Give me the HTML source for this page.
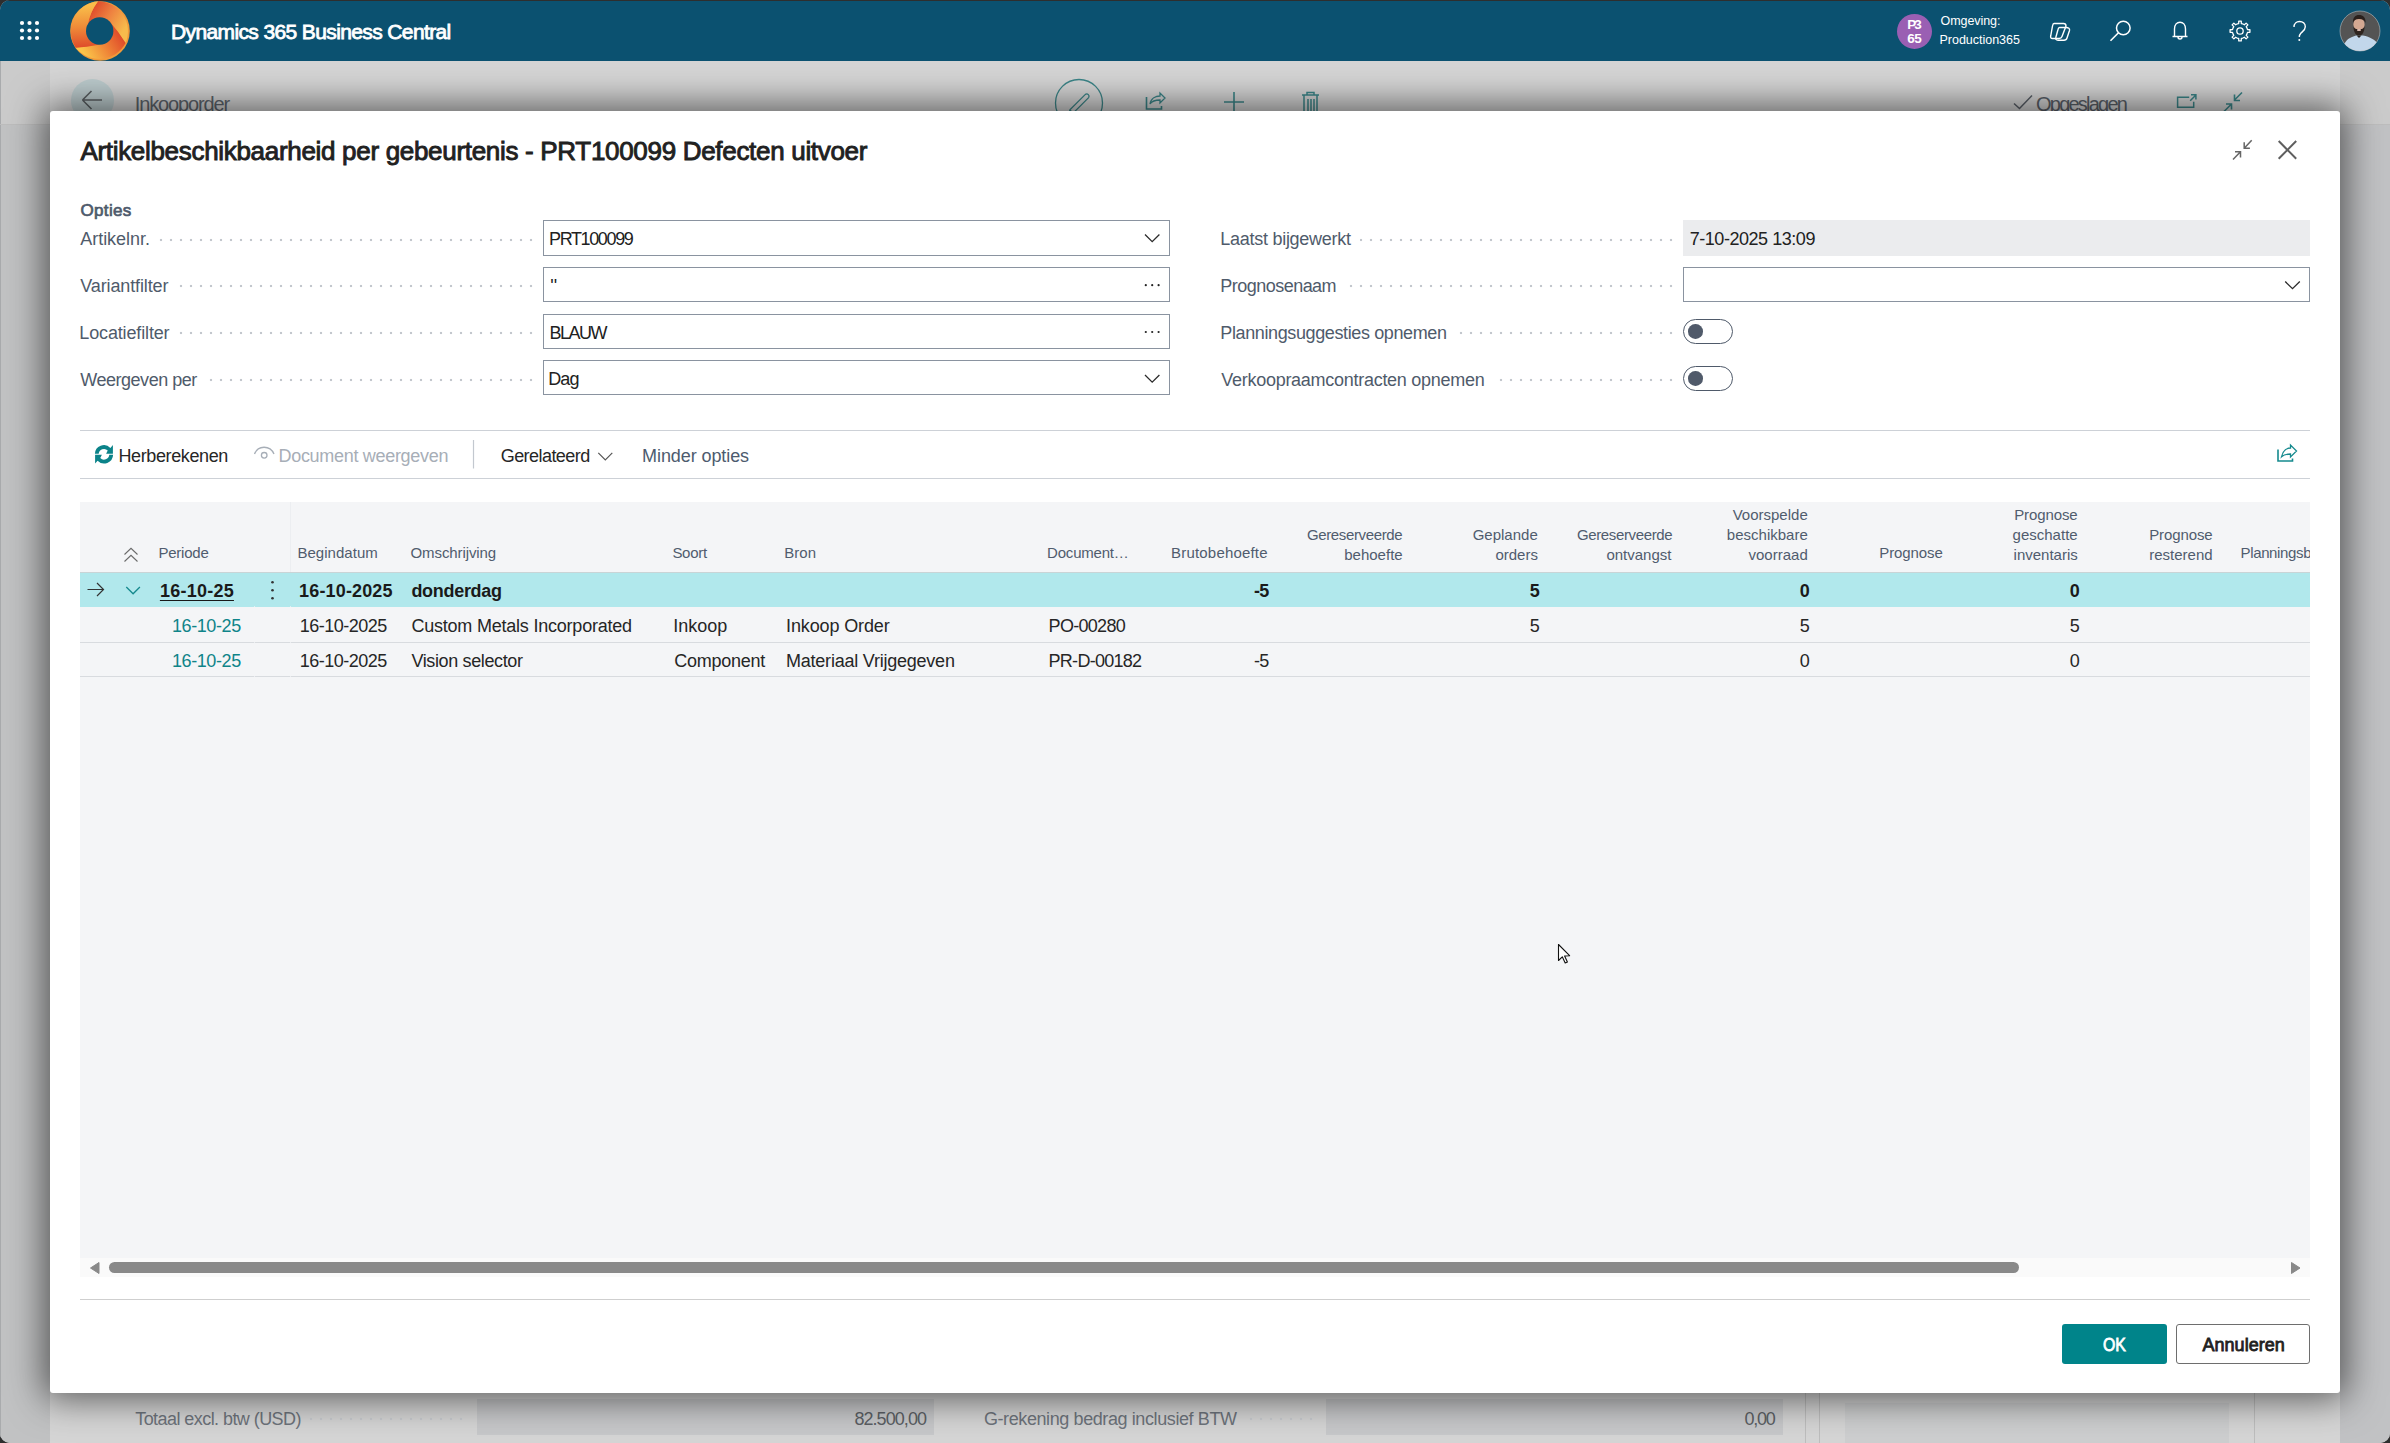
<!DOCTYPE html>
<html><head><meta charset="utf-8">
<style>
html,body{margin:0;padding:0;}
body{width:2390px;height:1443px;overflow:hidden;background:#2e2e2e;font-family:"Liberation Sans",sans-serif;position:relative;}
#win{position:absolute;left:0;top:0;width:2390px;height:1443px;border-radius:10px;overflow:hidden;background:#c6c7c9;}
.a{position:absolute;}
.t{position:absolute;white-space:pre;font-family:"Liberation Sans",sans-serif;}
.lbl{background:#fff;padding-right:9px;}
svg{position:absolute;overflow:visible;}
.box{position:absolute;box-sizing:border-box;border:1px solid #8a93a0;background:#fff;}
.lead{position:absolute;height:4px;background-image:radial-gradient(circle at 5px 2px,#c3c7cd 1.15px,rgba(255,255,255,0) 1.6px);background-size:10px 4px;}
</style></head><body>
<div id="win">
<!-- top dark line -->
<div class="a" style="left:0;top:0;width:2390px;height:1px;background:#2e2e2e;z-index:50"></div>
<!-- topbar -->
<div class="a" style="left:0;top:0;width:2390px;height:61px;background:#0b5170;"></div>

<!-- page backdrop -->
<div class="a" style="left:0;top:61px;width:50px;height:1382px;background:#c1c2c3;"></div>
<div class="a" style="left:0;top:61px;width:1px;height:1382px;background:#a9abad;"></div>
<div class="a" style="left:2340px;top:61px;width:50px;height:1382px;background:#c1c2c4;"></div>
<div class="a" style="left:50px;top:61px;width:2290px;height:1382px;background:#d5d5d5;"></div>
<div class="a" style="left:1px;top:61px;width:49px;height:63px;background:#cbcbcb;"></div>
<div class="a" style="left:2340px;top:61px;width:50px;height:63px;background:#cbcbcb;"></div>
<div class="a" style="left:0;top:124px;width:50px;height:1px;background:#bdbdbd;"></div>
<div class="a" style="left:2340px;top:124px;width:50px;height:1px;background:#bdbdbd;"></div>

<!-- page behind content -->
<div class="a" style="left:71px;top:79px;width:43px;height:43px;border-radius:50%;background:#bccbcd;"></div>
<svg style="left:0;top:0" width="2390" height="130">
  <path d="M82.5,100 H102 M82.5,100 L91.5,91 M82.5,100 L91.5,109" stroke="#5b6063" stroke-width="1.6" fill="none"/>
  <circle cx="1079" cy="103" r="23.5" stroke="#3b8588" stroke-width="1.3" fill="none"/>
  <path d="M1085.4,94.4 L1069.9,109.9 L1069,114 L1073.1,113.1 L1088.6,97.6 A2.3,2.3 0 0 0 1085.4,94.4 Z M1069.9,109.9 L1073.1,113.1" stroke="#3b8588" stroke-width="1.3" fill="none"/>
  <path d="M1146.5,97 V109 H1161.5 V106" stroke="#3b8588" stroke-width="1.6" fill="none"/>
  <path d="M1150,104 C1151,98 1156,96 1160,96 V93 L1165,98 L1160,103 V100 C1156,100 1152,101 1150,104 Z" stroke="#3b8588" stroke-width="1.3" fill="none"/>
  <path d="M1224,102 H1244 M1234,92 V112" stroke="#3b8588" stroke-width="1.6" fill="none"/>
  <path d="M1302,95 H1319 M1307,95 V92.5 H1314 V95 M1304,95 V112 M1317,95 V112 M1308,99 V112 M1311,99 V112 M1314,99 V112" stroke="#3b8588" stroke-width="1.5" fill="none"/>
  <path d="M2014,103.5 L2019.5,108.5 L2032,95.5" stroke="#5a6068" stroke-width="1.5" fill="none"/>
  <path d="M2189.2,97.2 H2177.6 V107.2 H2193.7 V101.7 M2190.2,100.7 L2195.7,95.2 M2191,94.7 H2195.9 V99.6" stroke="#3b8588" stroke-width="1.5" fill="none"/>
  <path d="M2223.5,112 L2231,104.5 M2226,104 H2231.5 V109.5 M2242,92.5 L2234.5,100 M2234.5,94.5 V100.5 H2240" stroke="#3b8588" stroke-width="1.6" fill="none"/>
</svg>
<!-- bottom behind fields -->
<div class="a" style="left:477px;top:1399px;width:457px;height:36px;background:#c7c8ca;"></div>
<div class="a" style="left:1326px;top:1399px;width:457px;height:36px;background:#c7c8ca;"></div>
<div class="a" style="left:1805px;top:1393px;width:1px;height:50px;background:#bdbdbd;"></div>
<div class="a" style="left:1819px;top:1393px;width:1px;height:50px;background:#bdbdbd;"></div>
<div class="a" style="left:1845px;top:1403px;width:384px;height:40px;background:#cdcecf;"></div>
<div class="a" style="left:2254px;top:1393px;width:1px;height:50px;background:#bdbdbd;"></div>
<div class="lead" style="left:306px;top:1417px;width:160px;opacity:.8"></div>
<div class="lead" style="left:1246px;top:1417px;width:70px;opacity:.8"></div>

<div class="t" style="left:134.70px;top:93.50px;font-size:20px;line-height:20px;font-weight:400;color:#5d646c;letter-spacing:-1.118px;">Inkooporder</div>
<div class="t" style="left:2036.00px;top:93.50px;font-size:20px;line-height:20px;font-weight:400;color:#5a6068;letter-spacing:-1.771px;">Opgeslagen</div>
<div class="t" style="left:135.20px;top:1409.70px;font-size:18px;line-height:18px;font-weight:400;color:#6d737b;letter-spacing:-0.560px;">Totaal excl. btw (USD)</div>
<div class="t" style="left:854.40px;top:1409.60px;font-size:18px;line-height:18px;font-weight:400;color:#5b5f64;letter-spacing:-0.933px;">82.500,00</div>
<div class="t" style="left:983.90px;top:1409.60px;font-size:18px;line-height:18px;font-weight:400;color:#6d737b;letter-spacing:-0.401px;">G-rekening bedrag inclusief BTW</div>
<div class="t" style="left:1744.60px;top:1409.60px;font-size:18px;line-height:18px;font-weight:400;color:#5b5f64;letter-spacing:-1.274px;">0,00</div>
<!-- dialog -->
<div class="a" style="left:50px;top:111px;width:2290px;height:1282px;background:#fff;border-radius:3px;box-shadow:0 0 36px 6px rgba(0,0,0,0.58);"></div>

<!-- dialog header icons -->
<svg style="left:0;top:0" width="2390" height="200">
  <path d="M2233,159.5 L2240.5,151.7 M2235,151.7 H2240.5 V157.5 M2251.7,140.3 L2244.2,148.2 M2244.2,142.3 V148.2 H2249.9" stroke="#666" stroke-width="1.5" fill="none"/>
  <path d="M2278.7,141 L2296.2,158.8 M2296.2,141 L2278.7,158.8" stroke="#5f5f5f" stroke-width="2" fill="none"/>
</svg>

<!-- leaders -->
<div class="lead" style="left:86px;top:238px;width:450px;"></div>
<div class="lead" style="left:86px;top:284px;width:450px;"></div>
<div class="lead" style="left:86px;top:331px;width:450px;"></div>
<div class="lead" style="left:86px;top:378px;width:450px;"></div>
<div class="lead" style="left:1226px;top:238px;width:450px;"></div>
<div class="lead" style="left:1226px;top:284px;width:450px;"></div>
<div class="lead" style="left:1226px;top:331px;width:450px;"></div>
<div class="lead" style="left:1226px;top:378px;width:450px;"></div>

<!-- inputs -->
<div class="box" style="left:543px;top:220px;width:627px;height:36px;"></div>
<div class="box" style="left:543px;top:267px;width:627px;height:35px;"></div>
<div class="box" style="left:543px;top:314px;width:627px;height:35px;"></div>
<div class="box" style="left:543px;top:360px;width:627px;height:35px;"></div>
<div class="a" style="left:1683px;top:220px;width:627px;height:36px;background:#ebecee;"></div>
<div class="box" style="left:1683px;top:267px;width:627px;height:35px;"></div>
<!-- toggles -->
<div class="a" style="left:1683px;top:319px;width:50px;height:25px;box-sizing:border-box;border:1.5px solid #4f5a6a;border-radius:13px;"></div>
<div class="a" style="left:1688.2px;top:324.1px;width:14.6px;height:14.6px;border-radius:50%;background:#505a6a;"></div>
<div class="a" style="left:1683px;top:366px;width:50px;height:25px;box-sizing:border-box;border:1.5px solid #4f5a6a;border-radius:13px;"></div>
<div class="a" style="left:1688.2px;top:371.2px;width:14.6px;height:14.6px;border-radius:50%;background:#505a6a;"></div>

<svg style="left:0;top:0" width="2390" height="500">
  <!-- chevrons -->
  <path d="M1145,234.5 L1152.2,241.7 L1159.4,234.5" stroke="#2b2b2b" stroke-width="1.3" fill="none"/>
  <path d="M1145,375 L1152.2,382.2 L1159.4,375" stroke="#2b2b2b" stroke-width="1.3" fill="none"/>
  <path d="M2285.2,281.5 L2292.5,288.7 L2299.8,281.5" stroke="#2b2b2b" stroke-width="1.3" fill="none"/>
  <!-- ellipsis -->
  <g fill="#222"><circle cx="1145.8" cy="285.2" r="1.1"/><circle cx="1152.2" cy="285.2" r="1.1"/><circle cx="1158.6" cy="285.2" r="1.1"/>
  <circle cx="1145.8" cy="332" r="1.1"/><circle cx="1152.2" cy="332" r="1.1"/><circle cx="1158.6" cy="332" r="1.1"/></g>
  <!-- refresh icon -->
  <g fill="#0b8389">
    <path d="M94.9,453.8 A9,9 0 0 1 110.4,447.9 L112.9,445 L112.9,453.8 L106.1,453.8 L107.75,450.55 A5.3,5.3 0 0 0 98.7,453.8 Z"/>
    <path d="M113.1,454.8 A9,9 0 0 1 97.6,460.7 L95.1,463.6 L95.1,454.8 L101.9,454.8 L100.25,458.05 A5.3,5.3 0 0 0 109.3,454.8 Z"/>
  </g>
  <!-- eye -->
  <path d="M254.5,454 C258,445 270,445 274,454" stroke="#a7aeb7" stroke-width="1.3" fill="none"/>
  <circle cx="264.2" cy="455.3" r="2.8" stroke="#a7aeb7" stroke-width="1.3" fill="none"/>
  <!-- separator -->
  <path d="M473.5,440 V468.5" stroke="#c3c8cf" stroke-width="1.2"/>
  <!-- gerelateerd chevron -->
  <path d="M598.3,452.8 L605.3,459.8 L612.3,452.8" stroke="#555" stroke-width="1.2" fill="none"/>
  <!-- share -->
  <path d="M2278,449.5 V461 H2292.5 V458.5" stroke="#168a8e" stroke-width="1.6" fill="none"/>
  <path d="M2281.5,456.8 C2283,450 2287.5,448 2290.5,448 V445 L2296.5,451 L2290.5,457 V454 C2287,454 2284,454.5 2281.5,456.8 Z" stroke="#168a8e" stroke-width="1.3" fill="none"/>
</svg>
<!-- action bar lines -->
<div class="a" style="left:80px;top:430px;width:2230px;height:1px;background:#cdd1d7;"></div>
<div class="a" style="left:80px;top:478px;width:2230px;height:1px;background:#cdd1d7;"></div>

<!-- grid -->
<div class="a" style="left:80px;top:502px;width:2230px;height:756px;background:#f4f5f7;"></div>
<div class="a" style="left:80px;top:572px;width:2230px;height:35px;background:#b1e8ec;"></div>
<div class="a" style="left:80px;top:572px;width:2230px;height:1px;background:#c9d4d6;"></div>
<div class="a" style="left:80px;top:642px;width:2230px;height:1px;background:#d8dbdf;"></div>
<div class="a" style="left:80px;top:676px;width:2230px;height:1px;background:#d8dbdf;"></div>
<div class="a" style="left:290px;top:502px;width:1px;height:70px;background:#eceef1;"></div>
<div class="a" style="left:254px;top:606px;width:1px;height:71px;background:#f4f5f7;opacity:.7"></div>
<div class="a" style="left:290px;top:606px;width:1px;height:71px;background:#f4f5f7;opacity:.7"></div>
<svg style="left:0;top:0" width="2390" height="700">
  <path d="M124.5,554.5 L131,548.3 L137.5,554.5 M124.5,561.5 L131,555.3 L137.5,561.5" stroke="#6a6a6a" stroke-width="1.1" fill="none"/>
  <path d="M87.5,589.5 H103.5 M97,583 L103.5,589.5 L97,596" stroke="#333" stroke-width="1.2" fill="none"/>
  <path d="M126.3,587 L133.1,593.8 L139.9,587" stroke="#168a8e" stroke-width="1.3" fill="none"/>
  <g fill="#333"><circle cx="272.5" cy="582.2" r="1.3"/><circle cx="272.5" cy="590.3" r="1.3"/><circle cx="272.5" cy="598.3" r="1.3"/></g>
</svg>
<div class="a" style="left:2230px;top:540px;width:80px;height:30px;overflow:hidden;">
  <div class="t" id="planb" style="left:10.5px;top:5px;font-size:15px;line-height:15px;color:#505c6e;letter-spacing:-0.35px;">Planningsbehoefte</div>
</div>

<!-- scrollbar -->
<div class="a" style="left:80px;top:1258px;width:2230px;height:19px;background:#fafafa;"></div>
<div class="a" style="left:109px;top:1262px;width:1910px;height:11px;border-radius:6px;background:#898989;"></div>
<svg style="left:0;top:0" width="2390" height="1443">
  <path d="M99,1262.5 V1273.5 L90.5,1268 Z" fill="#898989" stroke="#898989" stroke-width="1" stroke-linejoin="round"/>
  <path d="M2291.5,1262.5 V1273.5 L2300,1268 Z" fill="#898989" stroke="#898989" stroke-width="1" stroke-linejoin="round"/>
</svg>
<div class="a" style="left:80px;top:1299px;width:2230px;height:1px;background:#cfcfcf;"></div>
<!-- buttons -->
<div class="a" style="left:2062px;top:1324px;width:105px;height:40px;background:#00848a;border-radius:3px;"></div>
<div class="a" style="left:2176px;top:1324px;width:134px;height:40px;box-sizing:border-box;border:1px solid #6e6e6e;border-radius:3px;background:#fff;"></div>

<!-- cursor -->
<svg style="left:0;top:0" width="2390" height="1443">
  <path d="M1558.5,944.5 L1558.5,960.5 L1562.3,956.8 L1565.2,963 L1567.4,962 L1564.6,956 L1569.6,955.7 Z" fill="#fff" stroke="#111" stroke-width="1.1" stroke-linejoin="round"/>
</svg>

<!-- topbar icons -->
<svg style="left:0;top:0" width="2390" height="61">
  <g fill="#fff">
    <circle cx="22" cy="23" r="2.1"/><circle cx="29.5" cy="23" r="2.1"/><circle cx="37" cy="23" r="2.1"/>
    <circle cx="22" cy="30.5" r="2.1"/><circle cx="29.5" cy="30.5" r="2.1"/><circle cx="37" cy="30.5" r="2.1"/>
    <circle cx="22" cy="38" r="2.1"/><circle cx="29.5" cy="38" r="2.1"/><circle cx="37" cy="38" r="2.1"/>
  </g>
  <defs>
    <linearGradient id="b1" gradientUnits="userSpaceOnUse" x1="92" y1="9" x2="124" y2="30"><stop offset="0" stop-color="#df4b2b"/><stop offset="0.45" stop-color="#ee8040"/><stop offset="1" stop-color="#f7bb4c"/></linearGradient>
    <linearGradient id="b2" gradientUnits="userSpaceOnUse" x1="121" y1="35" x2="86" y2="57"><stop offset="0" stop-color="#df4a2a"/><stop offset="0.45" stop-color="#ee8136"/><stop offset="1" stop-color="#fcc64a"/></linearGradient>
    <linearGradient id="b3" gradientUnits="userSpaceOnUse" x1="86" y1="48" x2="84" y2="6"><stop offset="0" stop-color="#de4a2a"/><stop offset="0.5" stop-color="#ef8a38"/><stop offset="1" stop-color="#f9bd4a"/></linearGradient>
  </defs>
  <circle cx="100" cy="31" r="29.8" fill="#f09a3a"/>
  <path d="M98.07,1.3 A30,30 0 0 1 125.6,43 L109.8,21.7 L108.5,22.9 A12,12 0 0 0 89.1,25.5 L87.6,24.7 Q90,12 98.07,1.3 Z" fill="url(#b1)"/>
  <path d="M125.6,43 A30,30 0 0 1 75.7,47.7 L98.9,44.7 L99,43 A12,12 0 0 0 108.5,22.9 L109.8,21.7 Q119,32 125.6,43 Z" fill="url(#b2)"/>
  <path d="M75.7,47.7 A30,30 0 0 1 98.07,1.3 Q90,12 87.6,24.7 L89.1,25.5 A12,12 0 0 0 99,43 L98.9,44.7 Q86,47 75.7,47.7 Z" fill="url(#b3)"/>
  <circle cx="99.7" cy="31" r="13.7" fill="#0b5170"/>
  <!-- purple badge -->
  <circle cx="1914.5" cy="31.4" r="17.5" fill="#9a5fb3"/>
  <!-- copilot -->
  <g stroke="#fff" stroke-width="1.4" fill="none">
    <path d="M2054,23.5 H2063.5 C2065,23.5 2066,24.5 2066,26 L2062,36.5 C2061.5,38 2060.5,38.5 2059,38.5 H2052.5 C2051,38.5 2050.3,37.5 2050.7,36 L2052.5,26 C2052.8,24.5 2053.5,23.5 2054,23.5 Z"/>
    <path d="M2059.5,27.5 H2066 C2068.5,27.5 2070,28.5 2069.5,30.5 L2067,38 C2066.5,39.8 2065.5,40.2 2064,40.2 H2058 C2056,40.2 2055.3,39 2055.8,37.5 L2058,29.5 C2058.3,28.2 2058.8,27.5 2059.5,27.5 Z"/>
  </g>
  <!-- search -->
  <circle cx="2123.3" cy="28" r="6.8" stroke="#fff" stroke-width="1.5" fill="none"/>
  <path d="M2118.5,32.8 L2110.5,40.8" stroke="#fff" stroke-width="1.6"/>
  <!-- bell -->
  <path d="M2172.5,36.5 H2187.5 M2174.5,36.5 V29 C2174.5,24.8 2177,22.2 2180,22.2 C2183,22.2 2185.5,24.8 2185.5,29 V36.5 M2178,37 A2,2 0 0 0 2182,37" stroke="#fff" stroke-width="1.4" fill="none"/>
  <!-- gear -->
  <path transform="translate(2240,31)" d="M-2.91,-7.02 L-1.31,-7.49 L-1.25,-9.92 L1.25,-9.92 L1.31,-7.49 L2.91,-7.02 L4.37,-6.22 L6.13,-7.90 L7.90,-6.13 L6.22,-4.37 L7.02,-2.91 L7.49,-1.31 L9.92,-1.25 L9.92,1.25 L7.49,1.31 L7.02,2.91 L6.22,4.37 L7.90,6.13 L6.13,7.90 L4.37,6.22 L2.91,7.02 L1.31,7.49 L1.25,9.92 L-1.25,9.92 L-1.31,7.49 L-2.91,7.02 L-4.37,6.22 L-6.13,7.90 L-7.90,6.13 L-6.22,4.37 L-7.02,2.91 L-7.49,1.31 L-9.92,1.25 L-9.92,-1.25 L-7.49,-1.31 L-7.02,-2.91 L-6.22,-4.37 L-7.90,-6.13 L-6.13,-7.90 L-4.37,-6.22Z" stroke="#fff" stroke-width="1.3" fill="none" stroke-linejoin="round"/>
  <circle cx="2240" cy="31" r="3.2" stroke="#fff" stroke-width="1.3" fill="none"/>
  <!-- question -->
  <path d="M2294,27 C2294,23.5 2296.5,21.5 2299.5,21.5 C2302.8,21.5 2305.3,23.5 2305.3,26.7 C2305.3,30 2302.8,31.2 2301,33 C2299.8,34.3 2299.3,35.3 2299.3,37" stroke="#fff" stroke-width="1.4" fill="none"/>
  <circle cx="2299.3" cy="40" r="1" fill="#fff"/>
  <!-- avatar -->
  <clipPath id="avc"><circle cx="2360" cy="31" r="20"/></clipPath>
  <g clip-path="url(#avc)">
    <rect x="2340" y="11" width="40" height="40" fill="#545454"/>
    <path d="M2341,51 C2344,44 2346,39 2352,37 L2356,35.5 L2363,35.5 C2370,37 2375,39.5 2378,44 L2380,51 Z" fill="#c2d7eb"/>
    <path d="M2356.5,35.5 L2359,38 L2361.5,35.5 Z" fill="#2a2624"/>
    <ellipse cx="2359" cy="24.5" rx="5.6" ry="7.2" fill="#d3a892"/>
    <path d="M2353,23 C2352.5,17.5 2355.5,15 2359,15 C2363,15 2366,17.5 2365.5,23 C2364.5,20 2362.5,19 2359,19 C2355.5,19 2354,20 2353,23 Z" fill="#2a201c"/>
    <path d="M2353.4,26 C2353.5,32.5 2356,35.5 2359,35.5 C2362,35.5 2364.6,32.5 2364.6,26 C2363.5,29.5 2361.5,29 2359,29 C2356.5,29 2354.5,29.5 2353.4,26 Z" fill="#2e241f"/>
    <ellipse cx="2359" cy="30" rx="2.2" ry="1" fill="#e3c2b8"/>
  </g>
  <circle cx="2360" cy="31" r="20" stroke="#d8d8d8" stroke-width="0.8" fill="none" opacity="0.6"/>
</svg>

<div class="t" style="left:171.00px;top:21.00px;font-size:21px;line-height:21px;font-weight:400;color:#ffffff;letter-spacing:-0.620px;-webkit-text-stroke:0.8px #ffffff">Dynamics 365 Business Central</div>
<div class="t" style="left:1907.20px;top:17.70px;font-size:13.5px;line-height:13.5px;font-weight:700;color:#ffffff;letter-spacing:-2.004px;">P3</div>
<div class="t" style="left:1907.20px;top:31.70px;font-size:13.5px;line-height:13.5px;font-weight:700;color:#ffffff;letter-spacing:-0.508px;">65</div>
<div class="t" style="left:1940.50px;top:14.70px;font-size:12.5px;line-height:12.5px;font-weight:400;color:#ffffff;letter-spacing:-0.059px;">Omgeving:</div>
<div class="t" style="left:1939.50px;top:33.70px;font-size:12.5px;line-height:12.5px;font-weight:400;color:#ffffff;letter-spacing:-0.014px;">Production365</div>
<div class="t" style="left:80.40px;top:137.70px;font-size:26px;line-height:26px;font-weight:400;color:#212121;letter-spacing:-0.309px;-webkit-text-stroke:0.9px #212121">Artikelbeschikbaarheid per gebeurtenis - PRT100099 Defecten uitvoer</div>
<div class="t" style="left:80.50px;top:201.60px;font-size:17px;line-height:17px;font-weight:400;color:#4d5a6b;letter-spacing:0.334px;-webkit-text-stroke:0.7px #4d5a6b">Opties</div>
<div class="t lbl" style="left:80.30px;top:230.00px;font-size:18px;line-height:18px;font-weight:400;color:#4f5b6b;letter-spacing:-0.047px;">Artikelnr.</div>
<div class="t lbl" style="left:80.30px;top:276.80px;font-size:18px;line-height:18px;font-weight:400;color:#4f5b6b;letter-spacing:-0.126px;">Variantfilter</div>
<div class="t lbl" style="left:79.30px;top:323.80px;font-size:18px;line-height:18px;font-weight:400;color:#4f5b6b;letter-spacing:-0.146px;">Locatiefilter</div>
<div class="t lbl" style="left:80.30px;top:370.60px;font-size:18px;line-height:18px;font-weight:400;color:#4f5b6b;letter-spacing:-0.479px;">Weergeven per</div>
<div class="t lbl" style="left:1220.30px;top:230.10px;font-size:18px;line-height:18px;font-weight:400;color:#4f5b6b;letter-spacing:-0.273px;">Laatst bijgewerkt</div>
<div class="t lbl" style="left:1220.30px;top:277.00px;font-size:18px;line-height:18px;font-weight:400;color:#4f5b6b;letter-spacing:-0.526px;">Prognosenaam</div>
<div class="t lbl" style="left:1220.30px;top:323.70px;font-size:18px;line-height:18px;font-weight:400;color:#4f5b6b;letter-spacing:-0.382px;">Planningsuggesties opnemen</div>
<div class="t lbl" style="left:1221.30px;top:370.50px;font-size:18px;line-height:18px;font-weight:400;color:#4f5b6b;letter-spacing:-0.277px;">Verkoopraamcontracten opnemen</div>
<div class="t" style="left:549.00px;top:230.00px;font-size:18px;line-height:18px;font-weight:400;color:#212121;letter-spacing:-1.366px;">PRT100099</div>
<div class="t" style="left:550.30px;top:276.50px;font-size:18px;line-height:18px;font-weight:400;color:#212121;letter-spacing:0.000px;">&#x27;&#x27;</div>
<div class="t" style="left:549.50px;top:323.90px;font-size:18px;line-height:18px;font-weight:400;color:#212121;letter-spacing:-1.530px;">BLAUW</div>
<div class="t" style="left:548.20px;top:369.70px;font-size:18px;line-height:18px;font-weight:400;color:#212121;letter-spacing:-0.905px;">Dag</div>
<div class="t" style="left:1689.70px;top:230.10px;font-size:18px;line-height:18px;font-weight:400;color:#212121;letter-spacing:-0.457px;">7-10-2025 13:09</div>
<div class="t" style="left:118.40px;top:446.80px;font-size:18px;line-height:18px;font-weight:400;color:#262626;letter-spacing:-0.378px;">Herberekenen</div>
<div class="t" style="left:278.50px;top:446.80px;font-size:18px;line-height:18px;font-weight:400;color:#a7aeb7;letter-spacing:-0.305px;">Document weergeven</div>
<div class="t" style="left:500.70px;top:447.00px;font-size:18px;line-height:18px;font-weight:400;color:#262626;letter-spacing:-0.554px;">Gerelateerd</div>
<div class="t" style="left:642.10px;top:447.00px;font-size:18px;line-height:18px;font-weight:400;color:#4d5b6e;letter-spacing:-0.088px;">Minder opties</div>
<div class="t" style="left:158.40px;top:545.00px;font-size:15px;line-height:15px;font-weight:400;color:#505c6e;letter-spacing:-0.210px;">Periode</div>
<div class="t" style="left:297.40px;top:545.00px;font-size:15px;line-height:15px;font-weight:400;color:#505c6e;letter-spacing:0.038px;">Begindatum</div>
<div class="t" style="left:410.50px;top:545.00px;font-size:15px;line-height:15px;font-weight:400;color:#505c6e;letter-spacing:-0.095px;">Omschrijving</div>
<div class="t" style="left:672.40px;top:545.00px;font-size:15px;line-height:15px;font-weight:400;color:#505c6e;letter-spacing:-0.296px;">Soort</div>
<div class="t" style="left:784.20px;top:545.00px;font-size:15px;line-height:15px;font-weight:400;color:#505c6e;letter-spacing:0.053px;">Bron</div>
<div class="t" style="left:1047.10px;top:545.00px;font-size:15px;line-height:15px;font-weight:400;color:#505c6e;letter-spacing:-0.208px;">Document…</div>
<div class="t" style="left:1171.10px;top:545.00px;font-size:15px;line-height:15px;font-weight:400;color:#505c6e;letter-spacing:0.183px;">Brutobehoefte</div>
<div class="t" style="left:1306.90px;top:527.00px;font-size:15px;line-height:15px;font-weight:400;color:#505c6e;letter-spacing:-0.359px;">Gereserveerde</div>
<div class="t" style="left:1344.25px;top:547.00px;font-size:15px;line-height:15px;font-weight:400;color:#505c6e;letter-spacing:0.000px;">behoefte</div>
<div class="t" style="left:1472.69px;top:527.00px;font-size:15px;line-height:15px;font-weight:400;color:#505c6e;letter-spacing:0.000px;">Geplande</div>
<div class="t" style="left:1495.38px;top:547.00px;font-size:15px;line-height:15px;font-weight:400;color:#505c6e;letter-spacing:0.000px;">orders</div>
<div class="t" style="left:1576.90px;top:527.00px;font-size:15px;line-height:15px;font-weight:400;color:#505c6e;letter-spacing:-0.359px;">Gereserveerde</div>
<div class="t" style="left:1606.42px;top:547.00px;font-size:15px;line-height:15px;font-weight:400;color:#505c6e;letter-spacing:0.000px;">ontvangst</div>
<div class="t" style="left:1732.68px;top:507.00px;font-size:15px;line-height:15px;font-weight:400;color:#505c6e;letter-spacing:0.000px;">Voorspelde</div>
<div class="t" style="left:1726.86px;top:527.00px;font-size:15px;line-height:15px;font-weight:400;color:#505c6e;letter-spacing:0.000px;">beschikbare</div>
<div class="t" style="left:1748.54px;top:547.00px;font-size:15px;line-height:15px;font-weight:400;color:#505c6e;letter-spacing:0.000px;">voorraad</div>
<div class="t" style="left:1879.30px;top:545.20px;font-size:15px;line-height:15px;font-weight:400;color:#505c6e;letter-spacing:-0.110px;">Prognose</div>
<div class="t" style="left:2014.20px;top:507.00px;font-size:15px;line-height:15px;font-weight:400;color:#505c6e;letter-spacing:-0.110px;">Prognose</div>
<div class="t" style="left:2012.60px;top:527.00px;font-size:15px;line-height:15px;font-weight:400;color:#505c6e;letter-spacing:0.000px;">geschatte</div>
<div class="t" style="left:2013.60px;top:547.00px;font-size:15px;line-height:15px;font-weight:400;color:#505c6e;letter-spacing:0.000px;">inventaris</div>
<div class="t" style="left:2149.20px;top:527.00px;font-size:15px;line-height:15px;font-weight:400;color:#505c6e;letter-spacing:-0.110px;">Prognose</div>
<div class="t" style="left:2149.27px;top:547.00px;font-size:15px;line-height:15px;font-weight:400;color:#505c6e;letter-spacing:0.000px;">resterend</div>
<div class="t" style="left:159.90px;top:581.80px;font-size:18px;line-height:18px;font-weight:700;color:#1a1a1a;letter-spacing:0.251px;text-decoration:underline;text-underline-offset:3px;text-decoration-thickness:1px">16-10-25</div>
<div class="t" style="left:299.10px;top:581.80px;font-size:18px;line-height:18px;font-weight:700;color:#1a1a1a;letter-spacing:0.149px;">16-10-2025</div>
<div class="t" style="left:411.40px;top:581.80px;font-size:18px;line-height:18px;font-weight:700;color:#1a1a1a;letter-spacing:-0.300px;">donderdag</div>
<div class="t" style="left:1254.10px;top:581.80px;font-size:18px;line-height:18px;font-weight:700;color:#1a1a1a;letter-spacing:-0.794px;">-5</div>
<div class="t" style="left:1529.70px;top:581.80px;font-size:18px;line-height:18px;font-weight:700;color:#1a1a1a;letter-spacing:0.000px;">5</div>
<div class="t" style="left:1799.70px;top:581.80px;font-size:18px;line-height:18px;font-weight:700;color:#1a1a1a;letter-spacing:0.000px;">0</div>
<div class="t" style="left:2069.80px;top:581.80px;font-size:18px;line-height:18px;font-weight:700;color:#1a1a1a;letter-spacing:0.000px;">0</div>
<div class="t" style="left:171.90px;top:616.70px;font-size:18px;line-height:18px;font-weight:400;color:#0f8489;letter-spacing:-0.392px;">16-10-25</div>
<div class="t" style="left:299.70px;top:616.70px;font-size:18px;line-height:18px;font-weight:400;color:#262626;letter-spacing:-0.507px;">16-10-2025</div>
<div class="t" style="left:411.40px;top:616.70px;font-size:18px;line-height:18px;font-weight:400;color:#262626;letter-spacing:-0.216px;">Custom Metals Incorporated</div>
<div class="t" style="left:673.20px;top:616.70px;font-size:18px;line-height:18px;font-weight:400;color:#262626;letter-spacing:-0.007px;">Inkoop</div>
<div class="t" style="left:786.00px;top:616.70px;font-size:18px;line-height:18px;font-weight:400;color:#262626;letter-spacing:-0.124px;">Inkoop Order</div>
<div class="t" style="left:1048.60px;top:616.70px;font-size:18px;line-height:18px;font-weight:400;color:#262626;letter-spacing:-0.706px;">PO-00280</div>
<div class="t" style="left:1529.70px;top:616.70px;font-size:18px;line-height:18px;font-weight:400;color:#262626;letter-spacing:0.000px;">5</div>
<div class="t" style="left:1799.70px;top:616.70px;font-size:18px;line-height:18px;font-weight:400;color:#262626;letter-spacing:0.000px;">5</div>
<div class="t" style="left:2069.80px;top:616.70px;font-size:18px;line-height:18px;font-weight:400;color:#262626;letter-spacing:0.000px;">5</div>
<div class="t" style="left:171.90px;top:651.80px;font-size:18px;line-height:18px;font-weight:400;color:#0f8489;letter-spacing:-0.392px;">16-10-25</div>
<div class="t" style="left:299.70px;top:651.80px;font-size:18px;line-height:18px;font-weight:400;color:#262626;letter-spacing:-0.507px;">16-10-2025</div>
<div class="t" style="left:411.40px;top:651.80px;font-size:18px;line-height:18px;font-weight:400;color:#262626;letter-spacing:-0.367px;">Vision selector</div>
<div class="t" style="left:674.20px;top:651.80px;font-size:18px;line-height:18px;font-weight:400;color:#262626;letter-spacing:-0.257px;">Component</div>
<div class="t" style="left:786.00px;top:651.80px;font-size:18px;line-height:18px;font-weight:400;color:#262626;letter-spacing:-0.226px;">Materiaal Vrijgegeven</div>
<div class="t" style="left:1048.60px;top:651.80px;font-size:18px;line-height:18px;font-weight:400;color:#262626;letter-spacing:-0.737px;">PR-D-00182</div>
<div class="t" style="left:1254.10px;top:651.80px;font-size:18px;line-height:18px;font-weight:400;color:#262626;letter-spacing:-0.794px;">-5</div>
<div class="t" style="left:1799.70px;top:651.80px;font-size:18px;line-height:18px;font-weight:400;color:#262626;letter-spacing:0.000px;">0</div>
<div class="t" style="left:2069.80px;top:651.80px;font-size:18px;line-height:18px;font-weight:400;color:#262626;letter-spacing:0.000px;">0</div>
<div class="t" style="left:2103.00px;top:1336.00px;font-size:18px;line-height:18px;font-weight:400;color:#ffffff;letter-spacing:0.000px;-webkit-text-stroke:0.8px #ffffff;transform:scaleX(0.88);transform-origin:0 0">OK</div>
<div class="t" style="left:2202.50px;top:1336.00px;font-size:18px;line-height:18px;font-weight:400;color:#212121;letter-spacing:0.031px;-webkit-text-stroke:0.8px #212121">Annuleren</div>
</div>
</body></html>
